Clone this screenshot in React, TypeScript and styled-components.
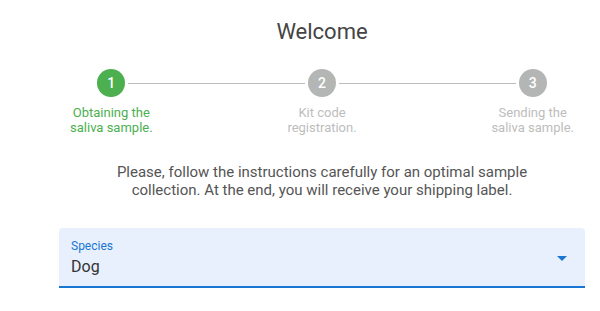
import React from "react";
import styled, { createGlobalStyle } from "styled-components";

const Global = createGlobalStyle`
  html, body { margin: 0; padding: 0; background: #ffffff; }
  body { font-family: Roboto, "Liberation Sans", Arial, sans-serif; }
  * { box-sizing: border-box; }
`;

const Page = styled.div`
  width: 600px;
  height: 311px;
  overflow: hidden;
`;

const Content = styled.main`
  padding: 0 15px 0 59px;
  display: flex;
  flex-direction: column;
`;

const Title = styled.h1`
  margin: 19px 0 0;
  font-size: 22px;
  line-height: 26px;
  font-weight: 400;
  color: #444444;
  text-align: center;
`;

const Stepper = styled.div`
  display: flex;
  margin: 24px -53px 0;
`;

const Step = styled.div`
  position: relative;
  flex: 1 1 0;
  display: flex;
  flex-direction: column;
  align-items: center;
`;

const Connector = styled.span`
  position: absolute;
  top: 14px;
  left: calc(-50% + 17px);
  right: calc(50% + 17px);
  border-top: 1px solid #bdbdbd;
`;

const Circle = styled.div<{ $active?: boolean }>`
  width: 28px;
  height: 28px;
  border-radius: 50%;
  background: ${(p) => (p.$active ? "#4caf50" : "#b3b6b4")};
  color: #ffffff;
  font-size: 14px;
  font-weight: 500;
  display: flex;
  align-items: center;
  justify-content: center;
`;

const StepLabel = styled.div<{ $active?: boolean }>`
  margin-top: 8px;
  font-size: 13px;
  line-height: 15px;
  text-align: center;
  color: ${(p) => (p.$active ? "#4caf50" : "#bdbdbd")};
`;

const Intro = styled.p`
  margin: 28px 0 0;
  font-size: 15px;
  line-height: 18px;
  color: #555555;
  text-align: center;
`;

const Field = styled.div`
  position: relative;
  margin-top: 29px;
  height: 60px;
  background: #e8f0fd;
  border-radius: 4px 4px 0 0;
  border-bottom: 2px solid #1976d2;
  display: flex;
  align-items: center;
  padding: 2px 11px 0 12px;
`;

const FieldBody = styled.div`
  flex: 1;
  display: flex;
  flex-direction: column;
`;

const FieldLabel = styled.span`
  font-size: 12px;
  line-height: 17px;
  color: #1976d2;
`;

const FieldValue = styled.span`
  font-size: 16px;
  line-height: 23px;
  color: #333333;
`;

const steps = [
  { n: 1, label: ["Obtaining the", "saliva sample."], active: true },
  { n: 2, label: ["Kit code", "registration."], active: false },
  { n: 3, label: ["Sending the", "saliva sample."], active: false },
];

export default function App() {
  return (
    <Page>
      <Global />
      <Content>
        <Title>Welcome</Title>
        <Stepper>
          {steps.map((s, i) => (
            <Step key={s.n}>
              {i > 0 && <Connector />}
              <Circle $active={s.active}>{s.n}</Circle>
              <StepLabel $active={s.active}>
                {s.label[0]}
                <br />
                {s.label[1]}
              </StepLabel>
            </Step>
          ))}
        </Stepper>
        <Intro>
          Please, follow the instructions carefully for an optimal sample
          <br />
          collection. At the end, you will receive your shipping label.
        </Intro>
        <Field>
          <FieldBody>
            <FieldLabel>Species</FieldLabel>
            <FieldValue>Dog</FieldValue>
          </FieldBody>
          <svg width="24" height="24" viewBox="0 0 24 24" aria-hidden="true">
            <path d="M7 10l5 5 5-5z" fill="#1976d2" />
          </svg>
        </Field>
      </Content>
    </Page>
  );
}
